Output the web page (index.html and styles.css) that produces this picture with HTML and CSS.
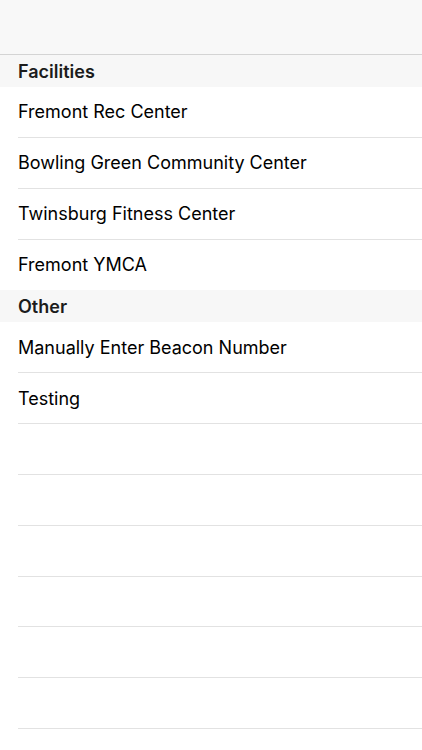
FILE: index.html
```html
<!DOCTYPE html>
<html lang="en">

<head>
  <meta charset="UTF-8">
  <meta name="viewport" content="width=device-width, initial-scale=1.0">
  <title>Select Facility</title>
  <link rel="stylesheet" href="styles.css">
</head>

<body>
  <div class="navBar"></div>

  <div class="sectionHeader">Facilities</div>
  <ul class="list">
    <li class="row">Fremont Rec Center</li>
    <li class="row">Bowling Green Community Center</li>
    <li class="row">Twinsburg Fitness Center</li>
    <li class="row">Fremont YMCA</li>
  </ul>

  <div class="sectionHeader">Other</div>
  <ul class="list">
    <li class="row">Manually Enter Beacon Number</li>
    <li class="row">Testing</li>
    <li class="row"></li>
    <li class="row"></li>
    <li class="row"></li>
    <li class="row"></li>
    <li class="row"></li>
    <li class="row"></li>
  </ul>
</body>

</html>
```

FILE: styles.css
```css
body {
  font-family: Inter, "Noto Sans", sans-serif;
  margin: 0;
  background-color: #ffffff;
  color: #000000;
  overflow: hidden;
}

.navBar {
  height: 54px;
  background-color: #f8f8f8;
  border-bottom: 1px solid #d4d4d4;
}

.sectionHeader {
  height: 32px;
  padding-left: 18px;
  display: flex;
  align-items: center;
  background-color: #f7f7f7;
  font-size: 18px;
  font-weight: 600;
  color: #1c1c1c;
}

.list {
  list-style-type: none;
  margin: 0;
  padding: 0;
}

.row {
  height: 49.85px;
  margin-left: 18px;
  display: flex;
  align-items: center;
  font-size: 18px;
  border-bottom: 1px solid #e2e2e2;
}

/* last row before a header hides its separator */
.list > .row:last-child {
  border-bottom-color: transparent;
}

.list:last-child > .row:last-child {
  border-bottom-color: #e2e2e2;
}
```
